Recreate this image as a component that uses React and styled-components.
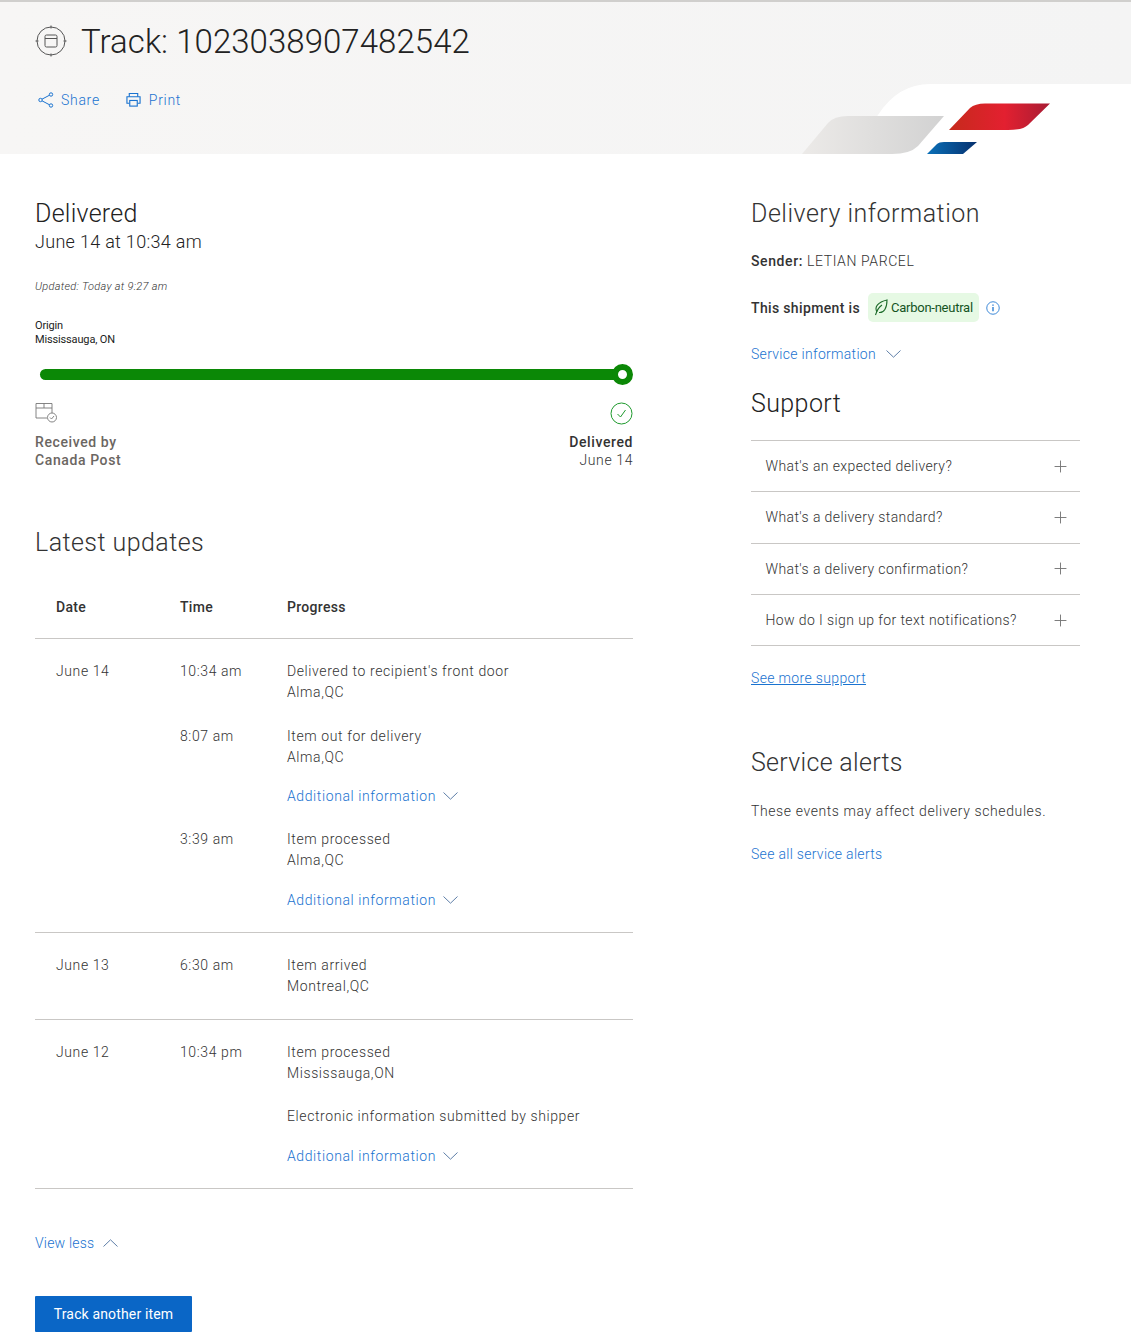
import styled, { createGlobalStyle } from "styled-components";
import { Plus } from "lucide-react";

const GlobalStyle = createGlobalStyle`
  html, body {
    margin: 0;
    padding: 0;
    background: #fff;
  }
  body {
    font-family: Roboto, "Liberation Sans", sans-serif;
    color: #333;
  }
  * {
    box-sizing: border-box;
  }
`;

const updates = [
  {
    date: "June 14",
    items: [
      { time: "10:34 am", lines: ["Delivered to recipient's front door", "Alma,QC"] },
      { time: "8:07 am", lines: ["Item out for delivery", "Alma,QC"], more: true },
      { time: "3:39 am", lines: ["Item processed", "Alma,QC"], more: true },
    ],
  },
  {
    date: "June 13",
    items: [{ time: "6:30 am", lines: ["Item arrived", "Montreal,QC"] }],
  },
  {
    date: "June 12",
    items: [
      {
        time: "10:34 pm",
        lines: ["Item processed", "Mississauga,ON"],
        note: "Electronic information submitted by shipper",
        more: true,
      },
    ],
  },
];

const faqs = [
  "What's an expected delivery?",
  "What's a delivery standard?",
  "What's a delivery confirmation?",
  "How do I sign up for text notifications?",
];

const TrackIcon = () => (
  <svg width="32" height="32" viewBox="0 0 32 32" fill="none" stroke="#555" strokeWidth="1">
    <circle cx="16" cy="16" r="14" />
    <path d="M16 0.5v3M16 28.5v3M0.5 16h3M28.5 16h3" />
    <rect x="10" y="10" width="12" height="12" rx="1.5" />
    <path d="M10 13.5h12" />
  </svg>
);

const ShareIcon = () => (
  <svg width="16" height="16" viewBox="0 0 16 16" fill="none" stroke="#1a73d0" strokeWidth="1">
    <circle cx="2.5" cy="8" r="1.7" />
    <circle cx="13" cy="2.5" r="1.7" />
    <circle cx="13" cy="13.5" r="1.7" />
    <path d="M4 7.2l7.5-4M4 8.8l7.5 4" />
  </svg>
);

const PrintIcon = () => (
  <svg width="15" height="16" viewBox="0 0 16 16" fill="none" stroke="#1a73d0" strokeWidth="1.2">
    <path d="M3.5 4.5V1h9v3.5" />
    <path d="M3.5 11.5H1V4.5h14v7h-2.5" />
    <rect x="4" y="8.5" width="8" height="6" />
  </svg>
);

const ParcelIcon = () => (
  <svg width="23" height="21" viewBox="0 0 23 21" fill="none" stroke="#777" strokeWidth="0.9">
    <path d="M12 16H1V1.5h16V11" />
    <path d="M1 6h16M9 1.5V6" />
    <circle cx="17" cy="15.5" r="4.5" fill="#fff" />
    <path d="M15 15.5l1.5 1.5 2.5-3" />
  </svg>
);

const CheckIcon = () => (
  <svg width="23" height="23" viewBox="0 0 23 23" fill="none" stroke="#1f9a2e" strokeWidth="1">
    <circle cx="11.5" cy="11.5" r="10.5" />
    <path d="M7.5 12l3 3 5-7" />
  </svg>
);

const LeafIcon = () => (
  <svg width="14" height="17" viewBox="0 0 14 17" fill="none" stroke="#1c6b2a" strokeWidth="1.1">
    <path d="M3 13C0 8 4 3 13 1c0 8-3 13-8 12.5" />
    <path d="M1.5 16C3 11 5 8 8 6" />
  </svg>
);

const InfoIcon = () => (
  <svg width="14" height="14" viewBox="0 0 15 15" fill="none" stroke="#1a73d0" strokeWidth="0.9">
    <circle cx="7.5" cy="7.5" r="6.7" />
    <path d="M7.5 6.5v4.5" strokeWidth="1.4" />
    <path d="M7.5 3.8v1.4" strokeWidth="1.4" />
  </svg>
);

const Chevron = ({ up }) => (
  <svg width="15" height="8" viewBox="0 0 15 8" fill="none" stroke="#5f7fa8" strokeWidth="1">
    <path d={up ? "M0.5 7.5L7.5 0.8L14.5 7.5" : "M0.5 0.5L7.5 7.2L14.5 0.5"} />
  </svg>
);

const Swoosh = () => (
  <SwooshArt width="351" height="70" viewBox="0 0 351 70">
    <defs>
      <linearGradient id="grey" x1="0" x2="1" y1="0" y2="0">
        <stop offset="0" stopColor="#eceae8" />
        <stop offset="1" stopColor="#d2d2d2" />
      </linearGradient>
      <linearGradient id="red" x1="0" x2="1" y1="0" y2="0">
        <stop offset="0" stopColor="#c62a1c" />
        <stop offset="0.55" stopColor="#e32030" />
        <stop offset="1" stopColor="#a81c34" />
      </linearGradient>
      <linearGradient id="blue" x1="0" x2="1" y1="0" y2="0">
        <stop offset="0" stopColor="#0a70b8" />
        <stop offset="1" stopColor="#06306e" />
      </linearGradient>
    </defs>
    <path d="M70 70 L98 31 Q118 0 150 0 H351 V70 Z" fill="#fff" />
    <path d="M22 70 L48 39 Q54 32 68 32 H164 L138 62 Q130 70 112 70 Z" fill="url(#grey)" />
    <path d="M169 46 L190 24 Q195 19.5 205 19.5 H270 L248 41 Q243 46 228 46 Z" fill="url(#red)" />
    <path d="M147 70 L157 60 Q159 58 164 58 H197 L183 70 Z" fill="url(#blue)" />
  </SwooshArt>
);

const App = () => (
  <>
    <GlobalStyle />
    <Banner>
      <Swoosh />
      <TitleRow>
        <TrackIcon />
        <Title>Track: 1023038907482542</Title>
      </TitleRow>
      <BannerActions>
        <BannerLink>
          <ShareIcon />
          Share
        </BannerLink>
        <BannerLink>
          <PrintIcon />
          Print
        </BannerLink>
      </BannerActions>
    </Banner>

    <Page>
      <MainColumn>
        <StatusTitle>Delivered</StatusTitle>
        <StatusDate>June 14 at 10:34 am</StatusDate>
        <Updated>Updated: Today at 9:27 am</Updated>
        <Origin>
          Origin
          <br />
          Mississauga, ON
        </Origin>

        <ProgressTrack>
          <ProgressBar />
          <ProgressKnob />
        </ProgressTrack>

        <Milestones>
          <Milestone>
            <MilestoneIcon>
              <ParcelIcon />
            </MilestoneIcon>
            <MilestoneLabel $muted>
              Received by
              <br />
              Canada Post
            </MilestoneLabel>
          </Milestone>
          <Milestone $end>
            <MilestoneIcon>
              <CheckIcon />
            </MilestoneIcon>
            <MilestoneLabel>Delivered</MilestoneLabel>
            <MilestoneDate>June 14</MilestoneDate>
          </Milestone>
        </Milestones>

        <SectionTitle>Latest updates</SectionTitle>

        <TableHead>
          <HeadCell>Date</HeadCell>
          <HeadCell>Time</HeadCell>
          <HeadCell>Progress</HeadCell>
        </TableHead>

        {updates.map((group) => (
          <DayGroup key={group.date}>
            <DateCell>{group.date}</DateCell>
            <Entries>
              {group.items.map((item) => (
                <Entry key={item.time}>
                  <TimeCell>{item.time}</TimeCell>
                  <div>
                    <EntryText>
                      {item.lines[0]}
                      <br />
                      {item.lines[1]}
                    </EntryText>
                    {item.note && <EntryNote>{item.note}</EntryNote>}
                    {item.more && (
                      <MoreLink>
                        Additional information
                        <Chevron />
                      </MoreLink>
                    )}
                  </div>
                </Entry>
              ))}
            </Entries>
          </DayGroup>
        ))}

        <ViewLess>
          View less
          <Chevron up />
        </ViewLess>
        <TrackButton>Track another item</TrackButton>
      </MainColumn>

      <SideColumn>
        <SideTitle>Delivery information</SideTitle>
        <Sender>
          <strong>Sender:</strong> LETIAN PARCEL
        </Sender>
        <ShipmentRow>
          <strong>This shipment is</strong>
          <CarbonBadge>
            <LeafIcon />
            Carbon-neutral
          </CarbonBadge>
          <InfoIcon />
        </ShipmentRow>
        <ServiceLink>
          Service information
          <Chevron />
        </ServiceLink>

        <SupportTitle>Support</SupportTitle>
        <FaqList>
          {faqs.map((faq) => (
            <FaqRow key={faq}>
              {faq}
              <Plus size={19} strokeWidth={1.2} color="#777" />
            </FaqRow>
          ))}
        </FaqList>
        <SupportLink>See more support</SupportLink>

        <AlertsTitle>Service alerts</AlertsTitle>
        <AlertsText>These events may affect delivery schedules.</AlertsText>
        <AlertsLink>See all service alerts</AlertsLink>
      </SideColumn>
    </Page>
  </>
);

const Banner = styled.header`
  position: relative;
  height: 154px;
  padding: 22px 0 0 35px;
  background: linear-gradient(90deg, #f7f6f5, #f4f4f4);
  border-top: 2px solid #d0cfcd;
  overflow: hidden;
`;

const SwooshArt = styled.svg`
  position: absolute;
  right: 0;
  bottom: 0;
  display: block;
`;

const TitleRow = styled.div`
  position: relative;
  display: flex;
  align-items: center;
  gap: 14px;
  height: 36px;
  svg {
    margin-top: -2px;
  }
`;

const Title = styled.h1`
  margin: 0;
  font-size: 33px;
  line-height: 36px;
  font-weight: 300;
  letter-spacing: 0.05px;
  color: #222;
`;

const BannerActions = styled.div`
  position: relative;
  display: flex;
  gap: 26px;
  margin-top: 31px;
  padding-left: 3px;
`;

const BannerLink = styled.a`
  display: flex;
  align-items: center;
  gap: 8px;
  font-size: 14px;
  line-height: 18px;
  font-weight: 300;
  letter-spacing: 0.7px;
  color: #1a73d0;
  &:first-child {
    gap: 7px;
  }
`;

const Page = styled.main`
  display: flex;
  align-items: flex-start;
  padding: 0 0 0 35px;
`;

const MainColumn = styled.section`
  width: 598px;
  margin-right: 118px;
  padding-top: 44px;
`;

const StatusTitle = styled.h2`
  margin: 0;
  font-size: 25px;
  line-height: 32px;
  font-weight: 300;
  letter-spacing: 0.25px;
  color: #222;
`;

const StatusDate = styled.div`
  margin-top: 1px;
  font-size: 18px;
  line-height: 22px;
  font-weight: 300;
  letter-spacing: 0.3px;
  color: #222;
`;

const Updated = styled.div`
  margin-top: 27px;
  font-size: 11px;
  line-height: 14px;
  font-style: italic;
  font-weight: 300;
  letter-spacing: 0.3px;
  color: #333;
`;

const Origin = styled.div`
  margin-top: 25px;
  font-size: 11px;
  line-height: 14px;
  letter-spacing: -0.15px;
  color: #222;
`;

const ProgressTrack = styled.div`
  position: relative;
  height: 21px;
  margin-top: 17px;
  padding: 5px 0 0 5px;
`;

const ProgressBar = styled.div`
  height: 11px;
  margin-right: 5px;
  border-radius: 6px;
  background: #0b8806;
`;

const ProgressKnob = styled.div`
  position: absolute;
  top: 0;
  right: 0;
  width: 21px;
  height: 21px;
  border: 6px solid #0b8806;
  border-radius: 50%;
  background: #fff;
`;

const Milestones = styled.div`
  display: flex;
  justify-content: space-between;
  margin-top: 17px;
`;

const Milestone = styled.div`
  display: flex;
  flex-direction: column;
  align-items: ${(p) => (p.$end ? "flex-end" : "flex-start")};
  text-align: ${(p) => (p.$end ? "right" : "left")};
`;

const MilestoneIcon = styled.div`
  height: 24px;
  margin-bottom: 7px;
  svg {
    display: block;
  }
`;

const MilestoneLabel = styled.div`
  font-size: 14px;
  line-height: 18px;
  font-weight: 500;
  letter-spacing: 0.6px;
  color: ${(p) => (p.$muted ? "#6b6662" : "#333")};
`;

const MilestoneDate = styled.div`
  font-size: 14px;
  line-height: 18px;
  font-weight: 300;
  letter-spacing: 0.6px;
  color: #333;
`;

const SectionTitle = styled.h2`
  margin: 58px 0 0;
  font-size: 25px;
  line-height: 32px;
  font-weight: 300;
  letter-spacing: 0.45px;
  color: #333;
`;

const TableHead = styled.div`
  display: grid;
  grid-template-columns: 124px 107px 1fr;
  height: 80px;
  padding: 39px 0 0 21px;
  border-bottom: 1px solid #c9c7c5;
`;

const HeadCell = styled.div`
  font-size: 14px;
  line-height: 18px;
  font-weight: 500;
  letter-spacing: 0.3px;
  color: #333;
`;

const DayGroup = styled.div`
  display: grid;
  grid-template-columns: 124px 1fr;
  padding: 22px 0 22px 21px;
  border-bottom: 1px solid #c9c7c5;
`;

const Entries = styled.div`
  display: flex;
  flex-direction: column;
  gap: 22.5px;
`;

const Entry = styled.div`
  display: grid;
  grid-template-columns: 107px 1fr;
`;

const DateCell = styled.div`
  font-size: 14px;
  line-height: 21px;
  font-weight: 300;
  letter-spacing: 0.6px;
`;

const TimeCell = styled(DateCell)``;

const EntryText = styled(DateCell)``;

const EntryNote = styled(DateCell)`
  margin-top: 22px;
`;

const MoreLink = styled.a`
  display: flex;
  align-items: center;
  gap: 7px;
  height: 21px;
  margin-top: 18px;
  font-size: 14px;
  font-weight: 300;
  letter-spacing: 0.6px;
  color: #1a73d0;
`;

const ViewLess = styled(MoreLink)`
  margin-top: 43px;
  gap: 9px;
  letter-spacing: 0.2px;
`;

const TrackButton = styled.button`
  display: block;
  width: 157px;
  height: 36px;
  margin-top: 43px;
  padding: 1px 0 0;
  border: 0;
  border-radius: 1px;
  background: #0a66c6;
  color: #fff;
  font-family: inherit;
  font-size: 14px;
  line-height: 35px;
  letter-spacing: 0.15px;
`;

const SideColumn = styled.aside`
  width: 329px;
  padding-top: 44px;
  font-size: 14px;
  letter-spacing: 0.4px;
`;

const SideTitle = styled.h2`
  margin: 0;
  font-size: 25px;
  line-height: 32px;
  font-weight: 300;
  letter-spacing: 0.5px;
  color: #333;
`;

const Sender = styled.div`
  margin-top: 22px;
  line-height: 18px;
  font-weight: 300;
  letter-spacing: 0.6px;
  strong {
    font-weight: 500;
  }
`;

const ShipmentRow = styled.div`
  display: flex;
  align-items: center;
  gap: 8px;
  height: 29px;
  margin-top: 23px;
  letter-spacing: 0.35px;
  strong {
    font-weight: 500;
  }
  > svg {
    margin-left: -1px;
  }
`;

const CarbonBadge = styled.span`
  display: flex;
  align-items: center;
  gap: 3px;
  height: 29px;
  padding: 0 6px;
  border-radius: 5px;
  background: #e6f9e4;
  color: #14541f;
  font-size: 13px;
  letter-spacing: -0.25px;
`;

const ServiceLink = styled(MoreLink)`
  margin-top: 21px;
  gap: 10px;
  letter-spacing: 0.3px;
`;

const SupportTitle = styled.h2`
  margin: 24px 0 0;
  font-size: 25px;
  line-height: 32px;
  font-weight: 300;
  color: #222;
`;

const FaqList = styled.div`
  margin-top: 20px;
  border-top: 1px solid #c9c7c5;
`;

const FaqRow = styled.div`
  display: flex;
  align-items: center;
  justify-content: space-between;
  height: 51.3px;
  padding: 0 10px 0 14.5px;
  border-bottom: 1px solid #c9c7c5;
  font-weight: 300;
  line-height: 18px;
`;

const SupportLink = styled.a`
  display: block;
  margin-top: 23px;
  line-height: 18px;
  font-weight: 300;
  letter-spacing: 0.35px;
  color: #1a73d0;
  text-decoration: underline;
`;

const AlertsTitle = styled(SideTitle)`
  margin-top: 60px;
  letter-spacing: 0.3px;
`;

const AlertsText = styled.p`
  margin: 23px 0 0;
  line-height: 18px;
  font-weight: 300;
  letter-spacing: 0.6px;
`;

const AlertsLink = styled.a`
  display: block;
  margin-top: 25px;
  line-height: 18px;
  font-weight: 300;
  letter-spacing: 0.3px;
  color: #1a73d0;
`;

export default App;
